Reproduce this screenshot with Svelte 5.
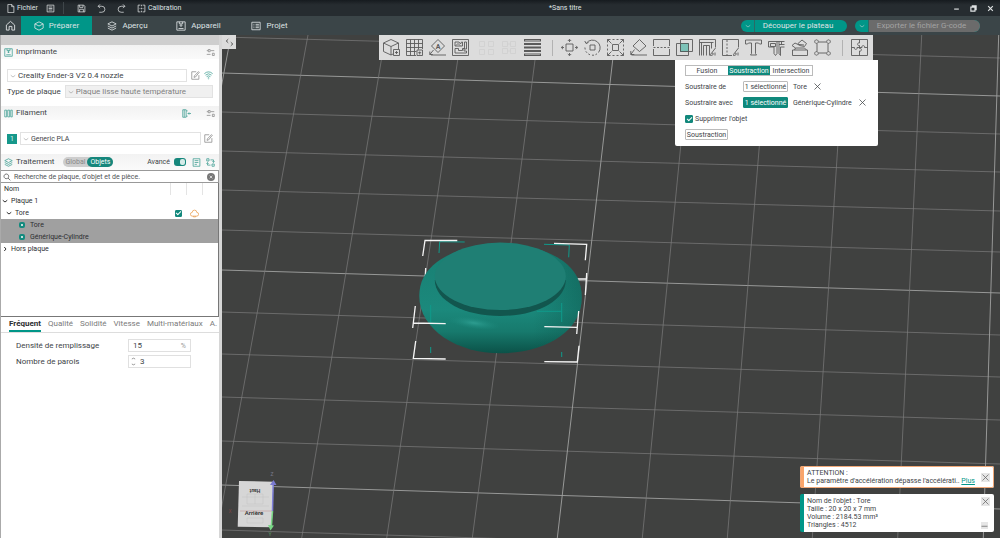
<script>
  const tabs = [
    { label: 'Préparer', icon: 'cube' },
    { label: 'Aperçu', icon: 'layers' },
    { label: 'Appareil', icon: 'printer' },
    { label: 'Projet', icon: 'list' }
  ];
  let activeTab = $state('Préparer');

  const settingTabs = ['Fréquent', 'Qualité', 'Solidité', 'Vitesse', 'Multi-matériaux', 'A.'];
  let activeSetting = $state('Fréquent');

  const operations = ['Fusion', 'Soustraction', 'Intersection'];
  let operation = $state('Soustraction');
  let removeObject = $state(true);

  let advanced = $state(true);
  let scope = $state('Objets');
  let search = $state('');
  let density = $state('15');
  let walls = $state('3');

  // 12 x 12 icons
  const small = {
    file: 'M2.5 .5h5l3 3v8h-8zM7.5 .5v3h3',
    doc: 'M1.5 1.5h9v9h-9zM3.5 4h5M3.5 6h5M3.5 8h5',
    save: 'M1.5 1.5h7.5l1.5 1.5v7.5h-9zM3.5 1.5v3h4.5v-3M3.5 10.5v-3.5h5v3.5',
    undo: 'M4 .5L1.5 3L4 5.5M1.5 3h5a4 4 0 0 1 0 8h-3.5',
    redo: 'M8 .5L10.5 3L8 5.5M10.5 3h-5a4 4 0 0 0 0 8h3.5',
    calib: 'M4.5 1.5h-3v9h3M7.5 1.5h3v9h-3M6 1v2M6 5v2M6 9v2M3.5 6h1M7.5 6h1',
    home: 'M1.5 5.5L6 1.5l4.5 4v5.5h-3v-4h-3v4h-3z',
    cube: 'M6 1L11 3.5v5L6 11L1 8.5v-5zM1 3.5L6 6l5-2.5',
    layers: 'M6 1l5 2.5L6 6L1 3.5zM1 6l5 2.5L11 6M1 8.5L6 11l5-2.5',
    printer: 'M1 1h10v10h-10zM3 9h6M4 1v2.5h4v-2.5M6 3.5v3M4.5 5L6 6.5L7.5 5',
    list: 'M1 1.5h10v9h-10zM3 4h1M3 6h1M3 8h1M5.5 4h4M5.5 6h4M5.5 8h4',
    sliders: 'M1 3.5h2M6 3.5h5M3 2h2.5v3h-2.5zM1 8.5h5M8.5 7h2.5v3h-2.5z',
    edit: 'M10.5 5.5v5.5h-9.5v-10h6M4 8.5l.5-2L10 .8l1 1L6 8z',
    wifi: 'M.5 3.5a8.5 8.5 0 0 1 11 0M2 5.5a6 6 0 0 1 8 0M3.5 7.5a4 4 0 0 1 5 0M5 9.3a1.5 1.5 0 0 1 2 0M6 10v1',
    spools: 'M1 1.5h2.5v9h-2.5zM5 1.5h2.5v9h-2.5zM9 1.5h2v9h-2z',
    addSpool: 'M1 1h4.5v10h-4.5zM3 1v10M5.5 2.5h2M5.5 9.5h2M8 6h4M9.5 4.5L8 6l1.5 1.5',
    note: 'M1.5 1h9v10h-9zM3.5 3.5h5M3.5 6h5M3.5 8.5h3',
    swap: 'M1 1h3v3h-3zM8 8h3v3h-3zM6 2.5h4v3M8.5 4.5l1.5 1.5L11.5 4.5M6 9.5h-4v-3M.5 7.5L2 6l1.5 1.5',
    lens: 'M5 1.5a3.5 3.5 0 1 0 .01 0M7.5 7.5L11 11',
    cross: 'M2 2l8 8M10 2l-8 8',
    minus: 'M2 7h8',
    restore: 'M1.5 3.5h7v7h-7zM4 3.5v-2h6.5v6.5h-2',
    down: 'M1.5 4.5L6 8l4.5-3.5',
    right: 'M4.5 2L8 6l-3.5 4',
    collapse: 'M4.5 1L1.5 4L4.5 7M1.5 4h2.5M7.5 5L10.5 8L7.5 11M10.5 8h-2.5'
  };

  // 17 x 17 toolbar icons
  const tools = [
    { name: 'Ajouter', d: 'M8 .5L.5 4v8.5L8 16V7.5L.5 4M8 .5L15.5 4L8 7.5M15.5 4v6M8 16l2-1M10.5 10.5h6v6h-6zM13.5 12v3M12 13.5h3' },
    { name: 'Ajouter une plaque', d: 'M10 16.5h-9.5v-16h16v9.5M.5 4.5h16M.5 8.5h16M.5 12.5h10M4.5 .5v16M8.5 .5v16M12.5 .5v10M11 11h5.5v5.5h-5.5zM13.7 12.5v3M12.2 13.7h3' },
    { name: 'Orientation automatique', d: 'M9 .5L15.5 7L9 13.5L2.5 7zM2 16h15M4.5 11L.8 15.5M.8 12.5v3h3', letter: 'A' },
    { name: 'Agencer', d: 'M.5 .5h16v16h-16zM3 3h4l1.5 2l1-2h1v4h-7.5zM12.5 3h2v7h-2zM3 9.5h3.5v2h4v-2h1.5v2.5h2.5v2h-11.5zM4 6.5l2-2l2 2' },
    { name: 'Diviser en objets', d: 'M1.5 2.5h5v5h-5zM10.5 2.5h5v5h-5zM1.5 10.5h5v5h-5zM10.5 10.5h5v5h-5z', off: true, start: true },
    { name: 'Diviser en pièces', d: 'M1.5 2.5h5v5h-5zM9.5 2.5h5v5h-5zM1.5 9.5h5v5h-5zM9.5 9.5h5v5h-5zM6.5 5h3M6.5 12h3', off: true },
    { name: 'Hauteur de couche variable', d: 'M.5 .5h16v1.5h-16zM.5 4.5h16v1h-16zM.5 8h16v1h-16zM.5 11.5h16v1h-16zM.5 15h16v1.5h-16z', heavy: true },
    { sep: true },
    { name: 'Déplacer', d: 'M5 5h7v7h-7zM8.5 3v-2.5M6.8 2L8.5 .3L10.2 2M8.5 14v2.5M6.8 15L8.5 16.7L10.2 15M3 8.5h-2.5M2 6.8L.3 8.5L2 10.2M14 8.5h2.5M15 6.8L16.7 8.5L15 10.2' },
    { name: 'Pivoter', d: 'M6 6h5v5h-5zM2.5 4A7.5 7.5 0 1 1 14.5 13.5M13 14.8l-1.5 .9M10 16.2h-2M6 15.8l-1.7-.9M3 13.8l-1.2-1.5M1.2 10.5l-.3-2M.8 2l1.2 2.5L4.5 3.5' },
    { name: 'Redimensionner', d: 'M5.5 5.5h6v6h-6zM.5 .5l4 4M16.5 .5l-4 4M.5 16.5l4-4M16.5 16.5l-4-4M.5 3.5v-3h3M13.5 .5h3v3M.5 13.5v3h3M13.5 16.5h3v-3M5.5 .5h2M9.5 .5h2M5.5 16.5h2M9.5 16.5h2M.5 5.5v2M.5 9.5v2M16.5 5.5v2M16.5 9.5v2' },
    { name: 'Poser sur une face', d: 'M9.5 .5L16 7L9.5 12.5L3 7zM1.5 16h15.5M4.5 10.5L.8 15.5M.8 12v3.5h3.5' },
    { name: 'Couper', d: 'M.5 7v-6.5h16v6.5M.5 10v6.5h16v-6.5M.5 8.5h2M4 8.5h2M7.5 8.5h2M11 8.5h2M14.5 8.5h2' },
    { name: 'Opération booléenne', d: 'M.5 4.5h12v12h-12zM4.5 .5h12v12h-12z', fill: 'M4.5 4.5h8v8h-8z' },
    { name: 'Peindre les supports', d: 'M.5 16.5v-16h16v8M.5 3.5h14M2.5 16.5v-13M4.5 16.5v-10h6v10M7.5 16.5v-10M12.5 3.5v6M16.5 9l-3.5 4.5M11.5 16.5c0-2 1-3 2.5-2.5c.5 2-.5 2.5-2.5 2.5M16 16.5v-3' },
    { name: 'Peindre la couture', d: 'M10 16.5h-9.5v-16h16v8M5 1v2M5 4.5v2M5 8v2M5 11.5v2M5 15v1.5M16.5 9l-3.5 4.5M11.5 16.5c0-2 1-3 2.5-2.5c.5 2-.5 2.5-2.5 2.5M16 16.5v-3' },
    { name: 'Texte en relief', d: 'M.5 1h16v4h-2l-1-1h-3v10.500l1 1.500h-6l1-1.500v-10.500h-3l-1 1h-2z' },
    { name: 'Mesurer', d: 'M.5 2.5h16M.5 2.5v5.5h5.5M2.5 4.5h5v3h-5zM6 8v6.5l1.5 2l1.5-2v-12M11 2.5v12l1.5 2v-8.5h4M11 5.5h5.5M13.5 2.5v3' },
    { name: 'Assembler', d: 'M1.5 11h15v5.5h-15zM3.5 11l1-2h9l2 2M4.5 9L1 6.5l3-2.5l4 2M7 4.5l4-3.5l4.5 3.5l-2 3l-5-1zM8 5.5l5 .5' },
    { name: 'Cage', d: 'M4.5 3h8M4.5 14h8M3 4.5v8M14 4.5v8M2.5 .8a1.8 1.8 0 1 0 .01 0M14.5 .8a1.8 1.8 0 1 0 .01 0M2.5 12.6a1.8 1.8 0 1 0 .01 0M14.5 12.6a1.8 1.8 0 1 0 .01 0' },
    { sep: true },
    { name: "Vue d'assemblage", d: 'M.5 .5h16v16h-16zM8.5 .5v3.5c-2.5-1-2.5 3.5 0 2.5v3c2.5-1 2.5 3.5 0 2.5v4.5M.5 8.5h3c-1 2.5 3.5 2.5 2.5 0h5c-1-2.5 3.5-2.5 2.5 0h3' }
  ];

  // bed grid: y at the left and right edge, then x at the top and bottom edge
  const rows = [
    [37, 58], [73, 96], [112, 134], [151, 172], [190, 211], [230, 252], [270, 293],
    [312, 335], [354, 377], [397, 420], [441, 464], [485, 509], [530, 554]
  ];
  const columns = [
    [231, 137], [308, 216], [385.5, 301.7], [461.4, 386.7], [538.3, 472.3], [615.6, 557.3],
    [691.6, 642.3], [768.4, 727.3], [845, 812.3], [921.7, 897.7], [998.7, 983.3]
  ];
</script>

{#snippet icon(name, cls = '')}
  <svg class="icon {cls}" viewBox="0 0 12 12" aria-hidden="true"><path d={small[name]} /></svg>
{/snippet}

<div class="app">
  <header class="titlebar">
    <button class="menu">{@render icon('file')}Fichier</button>
    <button class="menu" aria-label="Récents">{@render icon('doc')}</button>
    <span class="divider"></span>
    <button class="menu" aria-label="Enregistrer">{@render icon('save')}</button>
    <button class="menu" aria-label="Annuler">{@render icon('undo')}</button>
    <button class="menu" aria-label="Rétablir">{@render icon('redo')}</button>
    <button class="menu">{@render icon('calib')}Calibration</button>
    <span class="title">*Sans titre</span>
    <button class="win" aria-label="Réduire">{@render icon('minus')}</button>
    <button class="win" aria-label="Restaurer">{@render icon('restore')}</button>
    <button class="win" aria-label="Fermer">{@render icon('cross')}</button>
  </header>

  <nav class="tabbar">
    <button class="home" aria-label="Accueil">{@render icon('home')}</button>
    {#each tabs as tab}
      <button class="tab" class:active={activeTab === tab.label} onclick={() => (activeTab = tab.label)}>
        {@render icon(tab.icon)}{tab.label}
      </button>
    {/each}
    <div class="actions">
      <div class="split">
        <button class="arrow" aria-label="Options de découpe">{@render icon('down', 'tiny')}</button>
        <button class="action">Découper le plateau</button>
      </div>
      <div class="split disabled">
        <button class="arrow" aria-label="Options d'export">{@render icon('down', 'tiny')}</button>
        <button class="action wide" disabled>Exporter le fichier G-code</button>
      </div>
    </div>
  </nav>

  <main>
    <aside>
      <div class="strip"></div>
      <div class="section">
        {@render icon('printer', 'teal')}<h2>Imprimante</h2>
        <button aria-label="Réglages imprimante">{@render icon('sliders')}</button>
      </div>
      <div class="printer">
        <div class="row">
          <div class="combo">
            {@render icon('down', 'tiny')}
            <select aria-label="Imprimante"><option>Creality Ender-3 V2 0.4 nozzle</option></select>
          </div>
          <button aria-label="Modifier l'imprimante">{@render icon('edit')}</button>
          <button aria-label="Connexion">{@render icon('wifi', 'teal')}</button>
        </div>
        <div class="row">
          <label for="plate">Type de plaque</label>
          <div class="combo grey">
            {@render icon('down', 'tiny')}
            <select id="plate"><option>Plaque lisse haute température</option></select>
          </div>
        </div>
      </div>
      <div class="section">
        {@render icon('spools', 'teal')}<h2>Filament</h2>
        <button class="spaced" aria-label="Ajouter un filament">{@render icon('addSpool', 'teal')}</button>
        <button aria-label="Réglages filament">{@render icon('sliders')}</button>
      </div>
      <div class="filament">
        <span class="slot">1</span>
        <div class="combo">
          {@render icon('down', 'tiny')}
          <select class="pla" aria-label="Filament"><option>Generic PLA</option></select>
        </div>
        <button aria-label="Modifier le filament">{@render icon('edit')}</button>
      </div>
      <div class="section process">
        {@render icon('layers', 'teal')}<h2>Traitement</h2>
        <div class="scope">
          {#each ['Global', 'Objets'] as s}
            <button class:on={scope === s} onclick={() => (scope = s)}>{s}</button>
          {/each}
        </div>
        <label class="advanced">Avancé<input type="checkbox" class="switch" bind:checked={advanced} /></label>
        <button class="note" aria-label="Liste des réglages">{@render icon('note', 'teal')}</button>
        <button aria-label="Comparer">{@render icon('swap', 'teal')}</button>
      </div>
      <div class="search">
        {@render icon('lens', 'dark')}
        <input bind:value={search} aria-label="Recherche" placeholder="Recherche de plaque, d'objet et de pièce." />
        <button class="clear" aria-label="Effacer" onclick={() => (search = '')}>{@render icon('cross')}</button>
      </div>
      <div class="tree">
        <table>
          <thead>
            <tr><th>Nom</th><th class="col"></th><th class="col"></th><th class="col"></th></tr>
          </thead>
          <tbody>
            <tr><td colspan="4"><span class="node">{@render icon('down', 'tiny dark')}Plaque 1</span></td></tr>
            <tr>
              <td><span class="node lvl1">{@render icon('down', 'tiny dark')}Tore</span></td>
              <td><input type="checkbox" class="check mini" aria-label="Imprimable" checked /></td>
              <td>
                <svg class="icon orange" viewBox="0 0 12 12" aria-hidden="true">
                  <path d="M3 9.5a2.5 2.5 0 0 1 0-5a3 3 0 0 1 6 0a2.5 2.5 0 0 1 0 5zM4.5 9.5v1h3v-1" />
                </svg>
              </td>
              <td></td>
            </tr>
            {#each ['Tore', 'Générique-Cylindre'] as part}
              <tr class="selected">
                <td colspan="4"><span class="node lvl2"><i class="part"></i>{part}</span></td>
              </tr>
            {/each}
            <tr><td colspan="4"><span class="node">{@render icon('right', 'tiny dark')}Hors plaque</span></td></tr>
          </tbody>
        </table>
      </div>
      <div class="settings">
        {#each settingTabs as s}
          <button class:active={activeSetting === s} onclick={() => (activeSetting = s)}>{s}</button>
        {/each}
      </div>
      <div class="fields">
        <label for="density">Densité de remplissage</label>
        <div class="field"><input id="density" bind:value={density} /><span class="unit">%</span></div>
        <label for="walls">Nombre de parois</label>
        <div class="field">
          <svg class="spin" viewBox="0 0 6 10" aria-hidden="true"><path d="M1 2l2-1l2 1M1 8l2 1l2-1" /></svg>
          <input id="walls" bind:value={walls} />
        </div>
      </div>
    </aside>

    <section class="viewport">
      <svg class="scene" viewBox="222 35 778 503" preserveAspectRatio="xMidYMid slice" aria-hidden="true">
        <defs>
          <linearGradient id="body" x1="0" y1="0" x2="0" y2="1">
            <stop offset="0" stop-color="#197e72" />
            <stop offset=".6" stop-color="#1b897c" />
            <stop offset=".8" stop-color="#177a6d" />
            <stop offset="1" stop-color="#0b5248" />
          </linearGradient>
          <linearGradient id="shade" x1="0" y1="0" x2="1" y2="0">
            <stop offset=".7" stop-color="#0a4d44" stop-opacity="0" />
            <stop offset="1" stop-color="#0a4d44" stop-opacity=".4" />
          </linearGradient>
          <radialGradient id="shine">
            <stop offset="0" stop-color="#2d9d90" />
            <stop offset="1" stop-color="#1b897c" stop-opacity="0" />
          </radialGradient>
        </defs>
        <g class="grid">
          {#each rows as [left, right], i}
            <line class:major={i % 5 === 1} x1="222" y1={left} x2="1000" y2={right} />
          {/each}
          {#each columns as [top, bottom], i}
            <line class:major={i % 5 === 0} x1={top} y1="35" x2={bottom} y2="538" />
          {/each}
        </g>
        <path class="bracket" d="M425.7 268l-.7 13M425 275h5M576 279h10.7M586.7 273l-1.4 22" />
        <path fill="url(#body)" d="M437 262C425 271 419.3 282 419.3 296C419.3 330 458 353.3 500 353.3C545 353.3 581.7 331 581.7 298C581.7 282 576 271 563 261C530 238 470 238 437 262z" />
        <path fill="url(#shade)" d="M437 262C425 271 419.3 282 419.3 296C419.3 330 458 353.3 500 353.3C545 353.3 581.7 331 581.7 298C581.7 282 576 271 563 261C530 238 470 238 437 262z" />
        <ellipse cx="474" cy="323" rx="26" ry="6" fill="url(#shine)" transform="rotate(8 474 323)" />
        <path fill="#12564e" d="M434.8 280c0 21 30 36 65.5 36s65.500-15 65.5-36z" />
        <ellipse cx="500.3" cy="276.3" rx="65.5" ry="33.7" fill="#1f7f74" />
        <path class="inner" d="M439 253l.7-11.3l25 .3M544 244.3l25.3 .7l-.6 12.3M561.7 303v19M537 311.3h24.7M430.7 347v6M561.7 352v5M430.7 305v17" />
        <path class="bracket" d="M422.7 256l2.3-15.7l32.3 .2M554 243.3l32.7 1l-1.4 16M415.3 306l-2.6 22M413 323l32.7 .7M578.7 311l-2 23M544.3 326.7l32.7 .6M415.7 341l-2.4 17.3l32.4 .7M579 345.7l-1.7 16.3l-33-.3" />
        <path fill="#d6d6d6" d="M239 481l34.3 .7l-1.6 45.6l-34-.6z" />
        <path class="faces" d="M247 494h16v10h-16zM242 497h27M242 506h27M247 518h16v5h-16zM255 494v10" />
        <text class="face" x="254" y="515">Arrière</text>
        <text class="face top" transform="rotate(180 255 491)" x="255" y="493">Haut</text>
        <path stroke="#b88" stroke-width=".5" d="M240 511h32" />
        <path stroke="#7f80d8" stroke-width="1.5" d="M273.2 483l-.7 28" />
        <path fill="#7a7ad0" d="M270 485l3.5-5l3 5z" />
        <path stroke="#79d886" stroke-width="1.5" d="M272.5 511l-1.2 16" />
        <path fill="#79d886" d="M268 525l6 .5l-3.5 5z" />
        <text class="axis" x="272" y="476" fill="#778">Z</text>
        <text class="axis" x="270" y="536" fill="#5b9a62">Y</text>
        <text class="axis" x="230" y="513" fill="#744">X</text>
      </svg>

      <button class="collapse" aria-label="Replier le panneau">{@render icon('collapse')}</button>

      <div class="overlay">
        <div class="toolbar">
          {#each tools as tool}
            {#if tool.sep}
              <span class="sep"></span>
            {:else}
              <button class:start={tool.start} aria-label={tool.name} disabled={tool.off}>
                <svg class="tool" class:off={tool.off} class:heavy={tool.heavy} viewBox="0 0 17 17" aria-hidden="true">
                  {#if tool.fill}<path class="fill" d={tool.fill} />{/if}
                  <path d={tool.d} />
                  {#if tool.letter}<text x="9" y="9.5">{tool.letter}</text>{/if}
                </svg>
              </button>
            {/if}
          {/each}
        </div>

        <div class="boolean">
          <div class="ops">
            {#each operations as op}
              <button class:on={operation === op} onclick={() => (operation = op)}>{op}</button>
            {/each}
          </div>
          <div class="pick">
            <span>Soustraire de</span>
            <button class="count">1 sélectionné</button>
            <span>Tore</span>
            <button class="x" aria-label="Retirer Tore">{@render icon('cross')}</button>
          </div>
          <div class="pick">
            <span>Soustraire avec</span>
            <button class="count on">1 sélectionné</button>
            <span>Générique-Cylindre</span>
            <button class="x" aria-label="Retirer Générique-Cylindre">{@render icon('cross')}</button>
          </div>
          <label class="remove"><input type="checkbox" class="check" bind:checked={removeObject} />Supprimer l'objet</label>
          <button class="count apply">Soustraction</button>
        </div>
      </div>

      <div class="notices">
        <div class="notice warn">
          <p>ATTENTION :<br />Le paramètre d'accélération dépasse l'accélérati.. <a href="#plus">Plus</a></p>
          <button aria-label="Fermer l'alerte">{@render icon('cross')}</button>
        </div>
        <div class="notice">
          <p>Nom de l'objet : Tore<br />Taille : 20 x 20 x 7 mm<br />Volume : 2184.53 mm³<br />Triangles : 4512</p>
          <div class="side">
            <button aria-label="Fermer les informations">{@render icon('cross')}</button>
            <button class="less" aria-label="Réduire les informations">{@render icon('minus')}</button>
          </div>
        </div>
      </div>
    </section>
  </main>
</div>

<style>
  :global(body) {
    margin: 0;
    background: #404140;
  }

  .app {
    min-height: 100vh;
    display: flex;
    flex-direction: column;
    font-family: Roboto, 'Noto Sans', sans-serif;
    font-size: 7px;
    line-height: 10px;
    color: #404447;
  }

  .app * {
    box-sizing: border-box;
  }

  button,
  input,
  select {
    font: inherit;
    color: inherit;
    border: 0;
    padding: 0;
    margin: 0;
    background: none;
    min-width: 0;
  }

  button {
    display: flex;
    align-items: center;
    justify-content: center;
    cursor: pointer;
    white-space: nowrap;
  }

  .icon {
    width: 9px;
    height: 9px;
    flex: none;
    display: block;
    fill: none;
    stroke: currentColor;
    stroke-width: 1;
  }

  .tiny {
    width: 6px;
    height: 6px;
  }

  .teal {
    color: #3b9c90;
  }

  .dark {
    color: #333;
    stroke-width: 2;
  }

  .titlebar {
    height: 16px;
    display: flex;
    align-items: center;
    padding: 0 1px 0 6px;
    background: linear-gradient(#161b1f, #262c30 30%);
    color: #dfe2e3;
  }

  .menu {
    gap: 2px;
    margin-right: 11px;
  }

  .menu:first-child {
    margin-right: 8px;
  }

  .divider {
    width: 1px;
    height: 12px;
    margin: 0 13px 0 -3px;
    background: #3f464a;
  }

  .title {
    flex: 1;
    padding-right: 10px;
    text-align: center;
  }

  .win {
    width: 17px;
  }

  .win .icon {
    width: 7px;
    height: 7px;
    stroke-width: 2;
  }

  .tabbar {
    height: 19px;
    display: flex;
    background: #3b4548;
    color: #dfe3e4;
    font-size: 8px;
  }

  .home {
    width: 21px;
  }

  .home .icon {
    width: 11px;
    height: 11px;
  }

  .tab {
    width: 71px;
    gap: 5px;
  }

  .tab .icon {
    width: 10px;
    height: 10px;
  }

  .tab.active {
    background: #009688;
  }

  .actions {
    display: flex;
    align-items: center;
    gap: 8px;
    margin-left: auto;
    padding-right: 20px;
  }

  .split {
    display: flex;
    height: 12px;
    border-radius: 6px;
    overflow: hidden;
    background: #009688;
  }

  .arrow {
    width: 14px;
    border-right: 1px solid #2b6a66;
  }

  .action {
    width: 92px;
    padding-right: 6px;
  }

  .wide {
    width: 111px;
  }

  .disabled .action {
    background: #6b6b6b;
    color: #a3a3a3;
  }

  main {
    flex: 1;
    display: flex;
  }

  aside {
    flex: none;
    width: 222px;
    display: flex;
    flex-direction: column;
    background: #fff;
    border-left: 1px solid #aaa;
    border-right: 3px solid #d6d6d6;
  }

  .strip {
    height: 10px;
    background: #cecece;
  }

  .section {
    height: 14px;
    display: flex;
    align-items: center;
    gap: 3px;
    padding: 0 4px 0 3px;
    background: linear-gradient(#f2f2f2, #fafafa);
  }

  h2 {
    margin: 0 auto 0 0;
    font-size: 8px;
    font-weight: 400;
  }

  .section button,
  .row button,
  .filament button {
    color: #888;
  }

  .section .spaced {
    margin-right: 12px;
  }

  .printer {
    padding: 10px 6px 8px;
    display: flex;
    flex-direction: column;
    gap: 3px;
    font-size: 8px;
  }

  .row {
    display: flex;
    align-items: center;
    gap: 4px;
  }

  .combo {
    flex: 1;
    height: 13px;
    display: flex;
    align-items: center;
    gap: 2px;
    padding-left: 2px;
    border: 1px solid #e2e2e2;
    color: #404447;
  }

  .combo .tiny {
    color: #888;
  }

  .combo.grey {
    background: #f0f0f0;
    color: #808080;
  }

  select {
    flex: 1;
    appearance: none;
    outline: 0;
  }

  .pla {
    font-size: 7px;
  }

  .filament {
    display: flex;
    align-items: center;
    gap: 3px;
    padding: 12px 6px 9px;
  }

  .slot {
    width: 10px;
    height: 10px;
    background: #16988b;
    color: #d8f2ef;
    text-align: center;
  }

  .process {
    height: 16px;
  }

  .process h2 {
    margin-right: 6px;
  }

  .scope {
    display: flex;
    border-radius: 5px;
    background: #cdcdcd;
  }

  .scope button {
    height: 10px;
    padding: 0 2px;
    border-radius: 5px;
  }

  .scope .on {
    padding: 0 3px;
    background: #16877c;
    color: #fff;
  }

  .advanced {
    display: flex;
    align-items: center;
    gap: 4px;
    margin: 0 3px 0 auto;
  }

  .note {
    margin-right: 2px;
  }

  .switch {
    appearance: none;
    width: 12px;
    height: 8px;
    border-radius: 3px;
    background: #888;
  }

  .switch:checked {
    background: #16877c;
  }

  .switch::after {
    content: '';
    display: block;
    width: 5px;
    height: 6px;
    margin: 1px 1px 1px auto;
    border-radius: 2px;
    background: #d5ebe8;
  }

  .search {
    height: 13px;
    display: flex;
    align-items: center;
    gap: 3px;
    padding: 0 3px 0 2px;
    border: 1px solid #999;
    border-left: 0;
  }

  .search input {
    flex: 1;
    outline: 0;
  }

  .search input::placeholder {
    color: #505356;
    opacity: 1;
  }

  .search .icon.dark {
    width: 8px;
    height: 8px;
    stroke-width: 1;
  }

  .clear {
    width: 8px;
    height: 8px;
    border-radius: 4px;
    background: #777;
    color: #fff;
  }

  .clear .icon {
    width: 4px;
    height: 4px;
    stroke-width: 2;
  }

  .tree {
    height: 134px;
    border-bottom: 1px solid #777;
    border-right: 1px solid #777;
    overflow: hidden;
  }

  table {
    width: 100%;
    border-collapse: collapse;
    color: #2c2e30;
  }

  th,
  td {
    height: 12px;
    padding: 0;
    font-weight: 400;
    text-align: left;
  }

  th {
    padding-left: 3px;
  }

  .col {
    width: 16px;
    border-left: 1px solid #e4e4e4;
  }

  td .icon.orange {
    margin-left: 4px;
    color: #ea9c4c;
  }

  .node {
    display: flex;
    align-items: center;
    gap: 3px;
    padding-left: 1px;
  }

  .lvl1 {
    padding-left: 5px;
  }

  .lvl2 {
    padding-left: 18px;
    gap: 5px;
  }

  .selected {
    background: #a0a0a0;
  }

  .part {
    width: 6px;
    height: 6px;
    border: 2px solid #138a7e;
    border-radius: 2px;
    background: #c3dedb;
  }

  .check {
    appearance: none;
    display: grid;
    place-items: center;
    width: 8px;
    height: 8px;
    border: 1px solid #16877c;
    border-radius: 1px;
  }

  .check:checked {
    background: #0f897c;
  }

  .check:checked::after {
    content: '';
    width: 2px;
    height: 4px;
    margin-top: -1px;
    border: solid #fff;
    border-width: 0 1px 1px 0;
    transform: rotate(45deg);
  }

  .mini {
    width: 7px;
    height: 7px;
    margin-left: 5px;
  }

  .settings {
    height: 16px;
    display: flex;
    gap: 7px;
    padding-left: 8px;
    border-bottom: 1px solid #ddd;
    overflow: hidden;
    font-size: 8px;
  }

  .settings button {
    padding-top: 1px;
    border-bottom: 2px solid transparent;
    color: #7a7a7a;
  }

  .settings .active {
    border-bottom-color: #009688;
    font-weight: 700;
    color: #2c2e30;
  }

  .fields {
    display: grid;
    grid-template-columns: 112px 63px;
    gap: 3px 0;
    align-items: center;
    padding: 6px 0 0 15px;
    font-size: 8px;
  }

  .field {
    height: 13px;
    display: flex;
    align-items: center;
    padding: 0 4px;
    border: 1px solid #e0e0e0;
  }

  .field input {
    flex: 1;
    outline: 0;
  }

  .unit {
    font-size: 7px;
    color: #999;
  }

  .spin {
    width: 5px;
    height: 9px;
    margin: 0 4px 0 -2px;
    fill: none;
    stroke: #888;
  }

  .viewport {
    flex: 1;
    position: relative;
    display: flex;
    flex-direction: column;
    overflow: hidden;
    background: #404140;
  }

  .scene {
    position: absolute;
    inset: 0;
    width: 100%;
    height: 100%;
    fill: none;
  }

  .grid {
    stroke: #7c7d7c;
    stroke-width: .7;
  }

  .grid .major {
    stroke: #a0a1a0;
    stroke-width: .9;
  }

  .bracket {
    stroke: #f5f5f5;
    stroke-width: 1.3;
  }

  .inner {
    stroke: #0f9a8b;
    stroke-width: 1;
  }

  .faces {
    stroke: #c2c2c2;
    stroke-width: .5;
  }

  .face {
    fill: #333;
    font-size: 6px;
    font-weight: 600;
    text-anchor: middle;
  }

  .face.top {
    font-size: 5px;
  }

  .axis {
    font-size: 5px;
    text-anchor: middle;
  }

  .collapse {
    position: absolute;
    left: 0;
    top: 0;
    width: 14px;
    height: 14px;
    background: #dcdcdc;
    color: #666;
  }

  .overlay {
    position: relative;
    align-self: center;
    margin-left: 30px;
  }

  .toolbar {
    height: 25px;
    display: flex;
    align-items: center;
    gap: 6px;
    padding: 0 5px 0 4px;
    background: #dcdcdc;
    color: #5a5a5a;
  }

  .start {
    margin-left: 3px;
  }

  .tool {
    width: 17px;
    height: 17px;
    display: block;
    fill: none;
    stroke: currentColor;
    stroke-width: .9;
  }

  .tool.off {
    color: #d0d0d0;
  }

  .tool.heavy {
    stroke-width: 1.2;
  }

  .tool .fill {
    fill: #7cc3b8;
    stroke: #1e9385;
  }

  .tool text {
    font-size: 7px;
    font-weight: 700;
    text-anchor: middle;
    fill: currentColor;
    stroke: none;
  }

  .sep {
    width: 1px;
    height: 16px;
    margin: 0 2px 0 5px;
    background: #b2b2b2;
  }

  .boolean {
    position: absolute;
    right: -5px;
    top: 25px;
    width: 203px;
    display: flex;
    flex-direction: column;
    align-items: flex-start;
    gap: 5px;
    padding: 5px 10px 6px;
    border-radius: 0 0 2px 2px;
    background: #fff;
    white-space: nowrap;
  }

  .ops {
    display: flex;
    border: 1px solid #bbb;
  }

  .ops button {
    width: 42px;
    height: 9px;
  }

  .ops .on,
  .count.on {
    background: #0f897c;
    color: #fff;
  }

  .pick {
    display: flex;
    align-items: center;
  }

  .pick span:first-child {
    width: 58px;
  }

  .count {
    width: 45px;
    height: 11px;
    margin-right: 5px;
    border: 1px solid #bbb;
    border-radius: 1px;
  }

  .count.on {
    border-color: #0f897c;
  }

  .x {
    margin-left: 6px;
  }

  .remove {
    height: 11px;
    display: flex;
    align-items: center;
    gap: 2px;
  }

  .apply {
    width: 43px;
  }

  .notices {
    width: 194px;
    margin: auto 6px 6px auto;
    display: flex;
    flex-direction: column;
    gap: 6px;
    position: relative;
    line-height: 8px;
    white-space: nowrap;
  }

  .notice {
    display: flex;
    justify-content: space-between;
    align-items: center;
    padding: 3px 4px 3px 3px;
    border-left: 4px solid #009688;
    border-radius: 2px;
    background: #fff;
  }

  .notice.warn {
    outline: 1px solid #f0a878;
    outline-offset: -1px;
    border-color: #f9a56b;
  }

  p {
    margin: 0;
  }

  a {
    color: #009688;
  }

  .notice button {
    width: 9px;
    height: 9px;
    background: #e6e6e6;
    color: #666;
  }

  .side {
    align-self: stretch;
    display: flex;
    flex-direction: column;
    justify-content: space-between;
  }

  .notice .less {
    width: 7px;
    height: 7px;
  }
</style>
